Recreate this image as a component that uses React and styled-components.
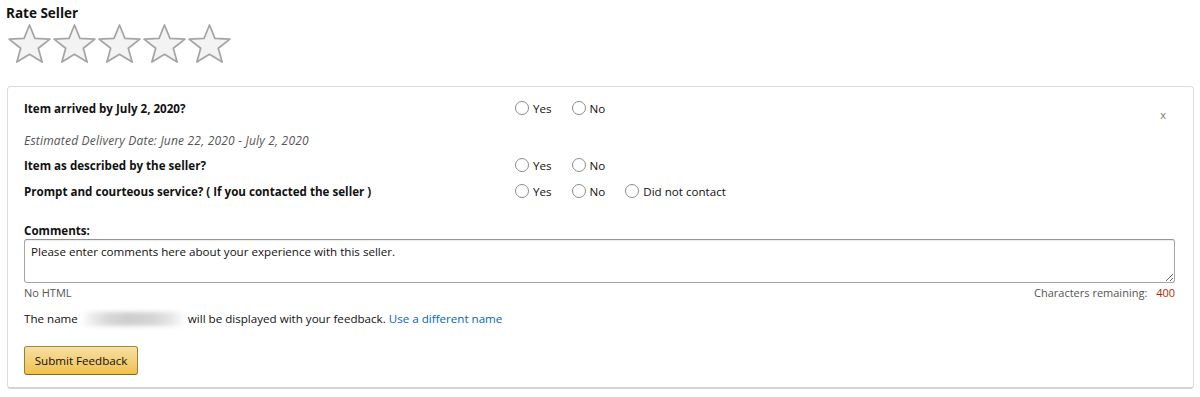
import React from "react";
import styled, { createGlobalStyle } from "styled-components";

const GlobalStyle = createGlobalStyle`
  body {
    margin: 0;
    background: #fff;
    font-family: "Open Sans", "Noto Sans", Arial, sans-serif;
    color: #111;
  }
`;

const starPoints = (() => {
  const cx = 22.5;
  const cy = 21.5;
  const pts = [];
  for (let i = 0; i < 10; i++) {
    const k = i % 2 === 0 ? 1 : 0.43;
    const a = ((-90 + i * 36) * Math.PI) / 180;
    const x = cx + 21.5 * k * Math.cos(a);
    const y = cy + 20.5 * k * Math.sin(a);
    pts.push(`${x.toFixed(2)},${y.toFixed(2)}`);
  }
  return pts.join(" ");
})();

function Star() {
  return (
    <svg width="45" height="40" viewBox="0 0 45 40">
      <polygon
        points={starPoints}
        fill="#f3f3f3"
        stroke="#a4a4a4"
        strokeWidth="1.7"
        strokeLinejoin="round"
      />
    </svg>
  );
}

function Radio({ label }) {
  return (
    <Option>
      <Circle />
      <span>{label}</span>
    </Option>
  );
}

export default function App() {
  return (
    <Page>
      <GlobalStyle />
      <Title>Rate Seller</Title>
      <Stars>
        {[0, 1, 2, 3, 4].map((i) => (
          <Star key={i} />
        ))}
      </Stars>
      <Card>
        <Close>x</Close>
        <Question>
          <Label>Item arrived by July 2, 2020?</Label>
          <Options>
            <Radio label="Yes" />
            <Radio label="No" />
          </Options>
        </Question>
        <Estimate>Estimated Delivery Date: June 22, 2020 - July 2, 2020</Estimate>
        <Question $gap="6px">
          <Label>Item as described by the seller?</Label>
          <Options>
            <Radio label="Yes" />
            <Radio label="No" />
          </Options>
        </Question>
        <Question $gap="8px">
          <Label>Prompt and courteous service? ( If you contacted the seller )</Label>
          <Options>
            <Radio label="Yes" />
            <Radio label="No" />
            <Radio label="Did not contact" />
          </Options>
        </Question>
        <CommentsLabel>Comments:</CommentsLabel>
        <TextArea defaultValue="Please enter comments here about your experience with this seller." />
        <Hints>
          <span>No HTML</span>
          <span>
            Characters remaining: <Count>400</Count>
          </span>
        </Hints>
        <NameLine>
          The name <Blurred /> will be displayed with your feedback.{" "}
          <Link href="#">Use a different name</Link>
        </NameLine>
        <Submit>Submit Feedback</Submit>
      </Card>
    </Page>
  );
}

const Page = styled.div`
  padding: 4px 6px 8px 7px;
  width: 1187px;
`;

const Title = styled.h2`
  margin: 0 0 0 -1px;
  font-size: 13.5px;
  font-weight: 700;
  line-height: 18px;
`;

const Stars = styled.div`
  display: flex;
  margin: 2px 0 0 0;
  height: 40px;
`;

const Card = styled.div`
  position: relative;
  margin-top: 22px;
  border: 1px solid #ddd;
  border-bottom: 2px solid #d3d3d3;
  border-radius: 4px;
  padding: 12px 17px 12px 16px;
`;

const Close = styled.span`
  position: absolute;
  right: 27px;
  top: 20px;
  font-size: 11px;
  color: #777;
`;

const Question = styled.div`
  display: flex;
  align-items: center;
  margin-top: ${(p) => p.$gap || "0"};
  height: 18px;
`;

const Label = styled.div`
  width: 491px;
  font-size: 11.6px;
  font-weight: 700;
`;

const Options = styled.div`
  display: flex;
  gap: 20px;
`;

const Option = styled.label`
  display: flex;
  align-items: center;
  gap: 4px;
  font-size: 11.6px;
`;

const Circle = styled.span`
  width: 12px;
  height: 12px;
  border: 1px solid #8c8c8c;
  border-radius: 50%;
  background: #fff;
`;

const Estimate = styled.div`
  margin-top: 15px;
  font-size: 12px;
  font-style: italic;
  letter-spacing: 0.2px;
  color: #555;
  height: 18px;
  line-height: 18px;
`;

const CommentsLabel = styled.div`
  margin-top: 23px;
  font-size: 11.6px;
  font-weight: 700;
  line-height: 16px;
`;

const TextArea = styled.textarea`
  display: block;
  box-sizing: border-box;
  width: 1151px;
  height: 44px;
  margin-top: 0;
  padding: 4px 6px;
  border: 1px solid #a6a6a6;
  border-top-color: #949494;
  border-radius: 3px;
  box-shadow: inset 0 1px 0 rgba(0, 0, 0, 0.07);
  font-family: "Open Sans", "Noto Sans", Arial, sans-serif;
  font-size: 11.6px;
  color: #111;
  resize: vertical;
`;

const Hints = styled.div`
  display: flex;
  justify-content: space-between;
  width: 1151px;
  margin-top: 2px;
  font-size: 11px;
  color: #555;
  line-height: 16px;
`;

const Count = styled.span`
  color: #b12704;
  margin-left: 6px;
`;

const NameLine = styled.div`
  margin-top: 9px;
  font-size: 11.6px;
  line-height: 18px;
  display: flex;
  align-items: center;
  white-space: pre;
`;

const Blurred = styled.span`
  display: inline-block;
  width: 104px;
  height: 14px;
  background: linear-gradient(
    90deg,
    #fff 0%,
    #f0f0f0 8%,
    #d9d9d9 25%,
    #cdcdcd 45%,
    #d6d6d6 70%,
    #e8e8e8 88%,
    #fff 100%
  );
  filter: blur(2px);
`;

const Link = styled.a`
  color: #0066c0;
  text-decoration: none;
`;

const Submit = styled.button`
  display: block;
  margin-top: 18px;
  width: 114px;
  height: 29px;
  border: 1px solid;
  border-color: #a88734 #9c7e31 #846a29;
  border-radius: 3px;
  background: linear-gradient(to bottom, #f7dfa5, #f0c14b);
  font-family: "Open Sans", "Noto Sans", Arial, sans-serif;
  font-size: 11.6px;
  color: #111;
  padding: 0;
`;
